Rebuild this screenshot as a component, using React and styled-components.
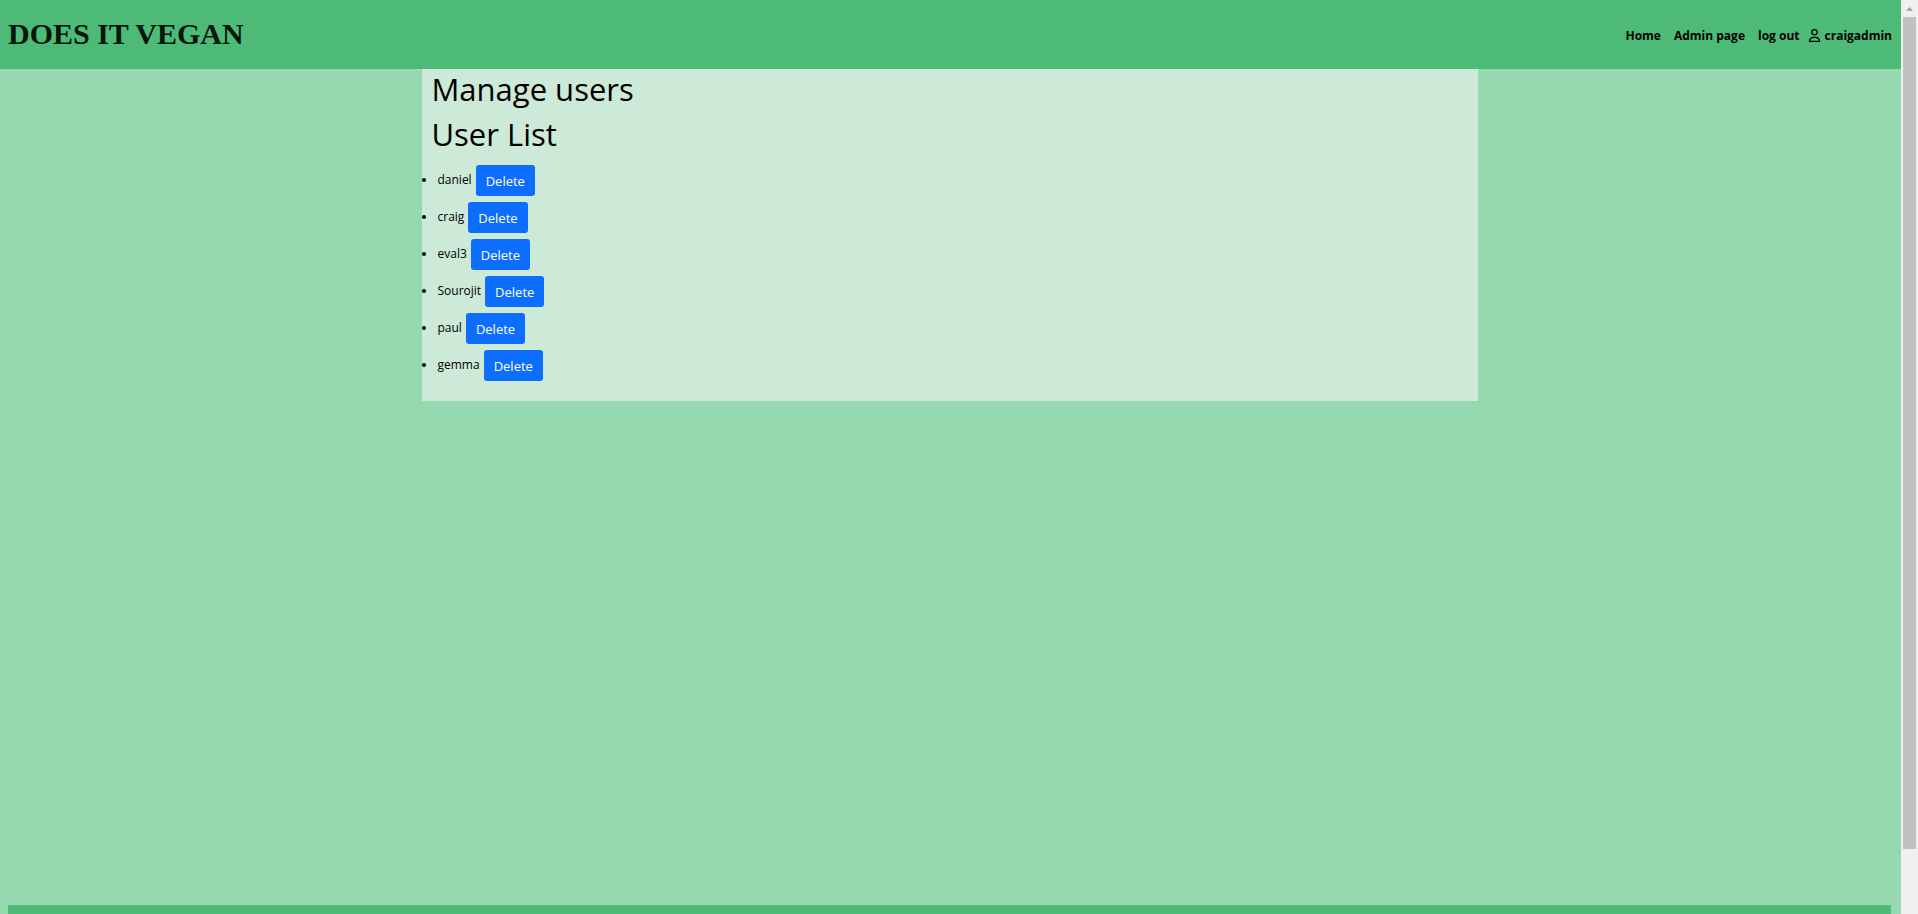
import React from "react";
import styled, { createGlobalStyle } from "styled-components";
import { FaRegUser } from "react-icons/fa6";

const GlobalStyle = createGlobalStyle`
  *, *::before, *::after { box-sizing: border-box; }
  body {
    margin: 0;
    color: #000;
    background: #96d8af;
    font-family: "Segoe UI", "Open Sans", "Noto Sans", sans-serif;
    font-size: 12px;
    line-height: 20px;
  }
`;

const Shell = styled.div`
  display: grid;
  grid-template-columns: minmax(0, 1fr) 17px;
  height: 100vh;
  overflow: hidden;
`;

const Page = styled.div`
  display: flex;
  flex-direction: column;
  min-height: 0;
`;

const Header = styled.header`
  display: flex;
  align-items: center;
  justify-content: space-between;
  height: 69px;
  flex: none;
  padding: 0 9px 0 8px;
  background: #4dbb77;
`;

const Brand = styled.a`
  padding-bottom: 2px;
  color: #04150c;
  font-family: "Liberation Serif", serif;
  font-size: 30px;
  font-weight: 700;
  line-height: 36px;
  text-decoration: none;
`;

const Nav = styled.nav`
  display: flex;
  align-items: center;
  gap: 13px;
  padding-top: 2px;
  font-weight: 700;
`;

const NavLink = styled.a`
  color: #000;
  text-decoration: none;
`;

const Account = styled.span`
  display: flex;
  align-items: center;
  gap: 8px;
`;

const UserName = styled.span`
  display: flex;
  align-items: center;
  gap: 4px;
`;

const Body = styled.div`
  flex: none;
  padding: 0 9px 0 8px;
`;

const Content = styled.main`
  width: 56%;
  margin: 0 auto;
  padding: 1px 9px 20px;
  background: #ccead7;
`;

const Heading = styled.h1`
  margin: 0 0 7px;
  font-size: 31px;
  font-weight: 500;
  line-height: 38px;
`;

const UserList = styled.ul`
  display: flex;
  flex-direction: column;
  gap: 6px;
  margin: 0;
  padding: 5px 0 0 6px;
`;

const UserRow = styled.li`
  height: 31px;
  line-height: 30px;
`;

const DeleteButton = styled.button`
  height: 31px;
  margin-left: 4px;
  padding: 1px 10px 0;
  border: 0;
  border-radius: 3px;
  color: #fff;
  background: #0d6efd;
  font-family: inherit;
  font-size: 13px;
  line-height: 20px;
  vertical-align: top;
  cursor: pointer;
`;

const Footer = styled.footer`
  flex: none;
  height: 9px;
  margin: auto 10px 0 8px;
  background: #4dbb77;
`;

const ScrollTrack = styled.div`
  display: flex;
  flex-direction: column;
  align-items: center;
  background: #f0f0f0;
`;

const ScrollArrow = styled.svg`
  display: block;
  width: 17px;
  height: 17px;
  flex: none;
`;

const ScrollThumb = styled.div`
  width: 13px;
  height: 91%;
  background: #c1c1c1;
`;

const users = ["daniel", "craig", "eval3", "Sourojit", "paul", "gemma"];

export default function App() {
  return (
    <>
      <GlobalStyle />
      <Shell>
        <Page>
          <Header>
            <Brand href="#home">DOES IT VEGAN</Brand>
            <Nav>
              <NavLink href="#home">Home</NavLink>
              <NavLink href="#admin">Admin page</NavLink>
              <Account>
                <NavLink href="#logout">log out</NavLink>
                <UserName>
                  <FaRegUser size={13} width={11} aria-hidden="true" />
                  craigadmin
                </UserName>
              </Account>
            </Nav>
          </Header>
          <Body>
            <Content>
              <Heading>Manage users</Heading>
              <Heading as="h2">User List</Heading>
              <UserList>
                {users.map((name) => (
                  <UserRow key={name}>
                    {name}
                    <DeleteButton type="button" aria-label={`Delete ${name}`}>Delete</DeleteButton>
                  </UserRow>
                ))}
              </UserList>
            </Content>
          </Body>
          <Footer />
        </Page>
        <ScrollTrack aria-hidden="true">
          <ScrollArrow viewBox="0 0 17 17">
            <path d="M5 11h7L8.500 7z" fill="#a3a3a3" />
          </ScrollArrow>
          <ScrollThumb />
        </ScrollTrack>
      </Shell>
    </>
  );
}
